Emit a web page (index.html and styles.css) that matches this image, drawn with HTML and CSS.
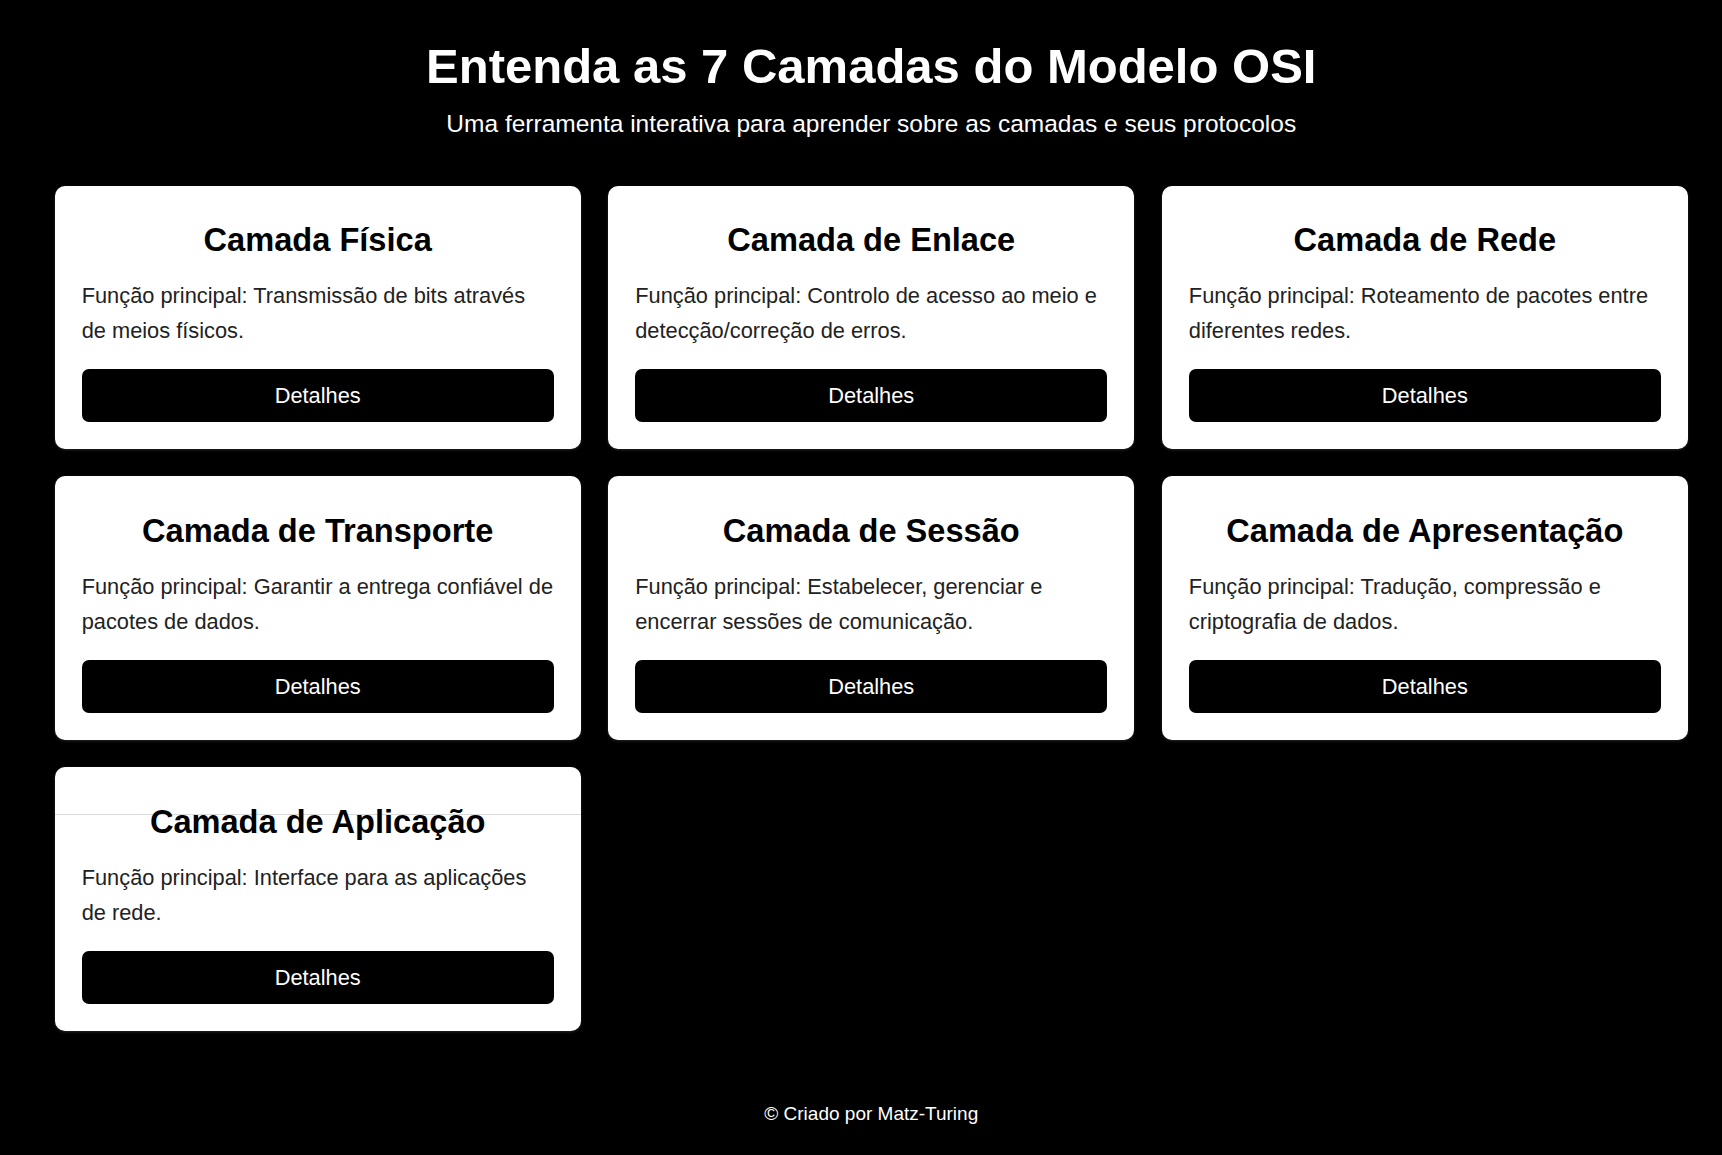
FILE: index.html
```html
<!DOCTYPE html>
<html lang="pt">
<head>
<meta charset="utf-8">
<title>Modelo OSI</title>
<link rel="stylesheet" href="styles.css">
</head>
<body>
<div class="page">
  <header class="hero">
    <h1 class="hero-title">Entenda as 7 Camadas do Modelo OSI</h1>
    <p class="hero-sub">Uma ferramenta interativa para aprender sobre as camadas e seus protocolos</p>
  </header>
  <main class="grid">
    <section class="card">
      <h2 class="card-title">Camada Física</h2>
      <p class="card-text">Função principal: Transmissão de bits através de meios físicos.</p>
      <button class="card-btn">Detalhes</button>
    </section>
    <section class="card">
      <h2 class="card-title">Camada de Enlace</h2>
      <p class="card-text">Função principal: Controlo de acesso ao meio e detecção/correção de erros.</p>
      <button class="card-btn">Detalhes</button>
    </section>
    <section class="card">
      <h2 class="card-title">Camada de Rede</h2>
      <p class="card-text">Função principal: Roteamento de pacotes entre diferentes redes.</p>
      <button class="card-btn">Detalhes</button>
    </section>
    <section class="card">
      <h2 class="card-title">Camada de Transporte</h2>
      <p class="card-text">Função principal: Garantir a entrega confiável de pacotes de dados.</p>
      <button class="card-btn">Detalhes</button>
    </section>
    <section class="card">
      <h2 class="card-title">Camada de Sessão</h2>
      <p class="card-text">Função principal: Estabelecer, gerenciar e encerrar sessões de comunicação.</p>
      <button class="card-btn">Detalhes</button>
    </section>
    <section class="card">
      <h2 class="card-title">Camada de Apresentação</h2>
      <p class="card-text">Função principal: Tradução, compressão e criptografia de dados.</p>
      <button class="card-btn">Detalhes</button>
    </section>
    <section class="card card--ruled">
      <h2 class="card-title">Camada de Aplicação</h2>
      <p class="card-text">Função principal: Interface para as aplicações de rede.</p>
      <button class="card-btn">Detalhes</button>
    </section>
  </main>
  <footer class="footer">© Criado por Matz-Turing</footer>
</div>
</body>
</html>
```

FILE: styles.css
```css
html, body {
  margin: 0;
  padding: 0;
  background: #000;
}

body {
  font-family: "Liberation Sans", Arial, sans-serif;
  color: #fff;
}

.page {
  padding: 38px 34px 0 54.5px;
}

.hero {
  text-align: center;
}

.hero-title {
  margin: 0 0 16px;
  font-size: 49px;
  font-weight: bold;
  line-height: normal;
}

.hero-sub {
  margin: 0;
  font-size: 24.5px;
  line-height: normal;
}

.grid {
  margin-top: 47.5px;
  display: grid;
  grid-template-columns: repeat(3, 1fr);
  gap: 27px 27.2px;
}

.card {
  position: relative;
  background: #fff;
  color: #222;
  border-radius: 10px;
  padding: 35.5px 27.2px 27px;
  box-shadow: 0 1px 3px rgba(255, 255, 255, 0.15);
  display: flex;
  flex-direction: column;
}

.card--ruled::before {
  content: "";
  position: absolute;
  left: 0;
  right: 0;
  top: 46.5px;
  height: 1px;
  background: #dadada;
}

.card-title {
  position: relative;
  margin: 0 0 20px;
  text-align: center;
  font-size: 32.6px;
  font-weight: bold;
  line-height: normal;
  color: #000;
}

.card-text {
  margin: 0 0 20.5px;
  font-size: 21.8px;
  line-height: 1.6;
  color: #222;
}

.card-btn {
  display: block;
  width: 100%;
  padding: 13.6px;
  border: none;
  border-radius: 7px;
  background: #000;
  color: #fff;
  font-family: "Liberation Sans", Arial, sans-serif;
  font-size: 21.8px;
  line-height: normal;
  cursor: pointer;
}

.footer {
  margin-top: 71.5px;
  text-align: center;
  font-size: 19px;
  line-height: normal;
  color: #fff;
}
```
